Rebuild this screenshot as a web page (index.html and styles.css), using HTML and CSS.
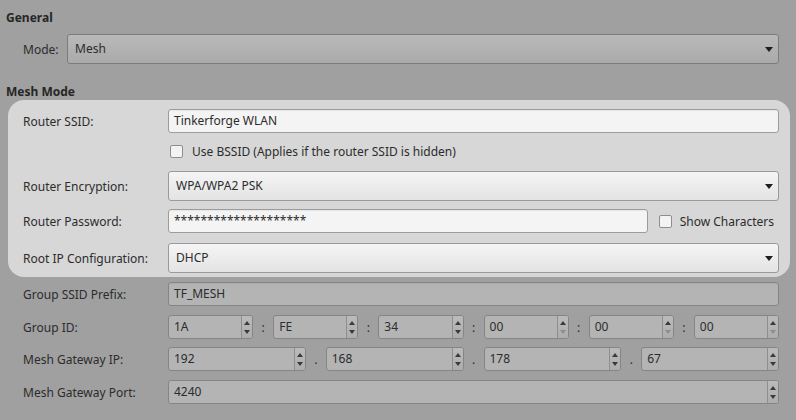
FILE: index.html
```html
<!DOCTYPE html>
<html lang="en">
<head>
  <meta charset="UTF-8">
  <title>Mesh Configuration</title>
  <link rel="stylesheet" href="styles.css">
</head>
<body>

  <h3 class="section-title first">General</h3>
  <div class="row outer">
    <span class="mode-label">Mode:</span>
    <div class="combo dark">Mesh<span class="arrow"></span></div>
  </div>

  <h3 class="section-title second">Mesh Mode</h3>
  <div class="panel">
    <div class="row">
      <span class="label">Router SSID:</span>
      <div class="edit">Tinkerforge WLAN</div>
    </div>
    <div class="row check-row">
      <span class="label"></span>
      <span class="check"></span>
      <span class="check-text">Use BSSID (Applies if the router SSID is hidden)</span>
    </div>
    <div class="row combo-row">
      <span class="label">Router Encryption:</span>
      <div class="combo">WPA/WPA2 PSK<span class="arrow"></span></div>
    </div>
    <div class="row pass-row">
      <span class="label">Router Password:</span>
      <div class="edit">********************</div>
      <span class="check show"></span>
      <span class="check-text">Show Characters</span>
    </div>
    <div class="row root-row">
      <span class="label">Root IP Configuration:</span>
      <div class="combo">DHCP<span class="arrow"></span></div>
    </div>
  </div>

  <div class="row outer prefix-row">
    <span class="label">Group SSID Prefix:</span>
    <div class="edit disabled">TF_MESH</div>
  </div>

  <div class="row outer gap9">
    <span class="label">Group ID:</span>
    <div class="fields">
      <div class="spin"><span class="spin-value">1A</span><span class="spin-btns"><i class="up"></i><i class="down"></i></span></div>
      <span class="sep">:</span>
      <div class="spin"><span class="spin-value">FE</span><span class="spin-btns"><i class="up"></i><i class="down"></i></span></div>
      <span class="sep">:</span>
      <div class="spin"><span class="spin-value">34</span><span class="spin-btns"><i class="up"></i><i class="down"></i></span></div>
      <span class="sep">:</span>
      <div class="spin"><span class="spin-value">00</span><span class="spin-btns"><i class="up"></i><i class="down off"></i></span></div>
      <span class="sep">:</span>
      <div class="spin"><span class="spin-value">00</span><span class="spin-btns"><i class="up"></i><i class="down off"></i></span></div>
      <span class="sep">:</span>
      <div class="spin"><span class="spin-value">00</span><span class="spin-btns"><i class="up"></i><i class="down off"></i></span></div>
    </div>
  </div>

  <div class="row outer gap8">
    <span class="label">Mesh Gateway IP:</span>
    <div class="fields">
      <div class="spin"><span class="spin-value">192</span><span class="spin-btns"><i class="up"></i><i class="down"></i></span></div>
      <span class="sep">.</span>
      <div class="spin"><span class="spin-value">168</span><span class="spin-btns"><i class="up"></i><i class="down"></i></span></div>
      <span class="sep">.</span>
      <div class="spin"><span class="spin-value">178</span><span class="spin-btns"><i class="up"></i><i class="down"></i></span></div>
      <span class="sep">.</span>
      <div class="spin"><span class="spin-value">67</span><span class="spin-btns"><i class="up"></i><i class="down"></i></span></div>
    </div>
  </div>

  <div class="row outer gap9">
    <span class="label">Mesh Gateway Port:</span>
    <div class="fields">
      <div class="spin"><span class="spin-value">4240</span><span class="spin-btns"><i class="up"></i><i class="down"></i></span></div>
    </div>
  </div>

</body>
</html>
```

FILE: styles.css
```css
body {
  margin: 0;
  background-color: #a0a0a0;
  font-family: "Noto Sans", "Open Sans", sans-serif;
  font-size: 12px;
  color: #2c2c2c;
}

.section-title {
  margin: 0;
  padding-left: 6px;
  height: 16px;
  line-height: 16px;
  font-size: 12px;
  font-weight: bold;
  color: #262626;
}

.section-title.first {
  margin-top: 10px;
}

.section-title.second {
  margin-top: 20px;
}

.row {
  display: flex;
  align-items: center;
}

.outer {
  padding: 0 17px 0 23px;
}

.row.outer:nth-of-type(1) {
  margin-top: 8px;
}

.mode-label {
  width: 44px;
}

.label {
  width: 145px;
  flex-shrink: 0;
}

.panel {
  margin-left: 8px;
  width: 782px;
  box-sizing: border-box;
  padding: 9px 11px 4px 15px;
  background-color: #d7d7d7;
  border-radius: 16px;
}

.edit {
  flex: 1;
  height: 24px;
  line-height: 22px;
  box-sizing: border-box;
  padding-left: 5px;
  background-color: #f4f4f4;
  border: 1px solid #9c9c9c;
  border-radius: 3px;
  box-shadow: inset 0 1px 1px rgba(0, 0, 0, 0.06);
}

.edit.disabled {
  background-color: #b4b4b4;
  border-color: #858585;
}

.combo {
  flex: 1;
  position: relative;
  height: 30px;
  line-height: 28px;
  box-sizing: border-box;
  padding-left: 7px;
  background: linear-gradient(#f5f5f5, #e3e3e3);
  border: 1px solid #9a9a9a;
  border-radius: 3px;
}

.combo.dark {
  background: linear-gradient(#b9b9b9, #aaaaaa);
  border-color: #7c7c7c;
}

.arrow {
  position: absolute;
  right: 5px;
  top: 12px;
  width: 0;
  height: 0;
  border-left: 4px solid transparent;
  border-right: 4px solid transparent;
  border-top: 5px solid #1e1e1e;
}

.check-row {
  margin-top: 6px;
  height: 24px;
}

.check {
  width: 13px;
  height: 13px;
  box-sizing: border-box;
  margin-left: 2px;
  background-color: #f3f3f3;
  border: 1px solid #8e8e8e;
  border-radius: 2px;
}

.check-text {
  margin-left: 9px;
}

.check.show {
  margin-left: 11px;
}

.pass-row .check-text {
  margin-left: 8px;
  margin-right: 5px;
}

.combo-row {
  margin-top: 8px;
}

.pass-row {
  margin-top: 8px;
}

.root-row {
  margin-top: 10px;
}

.prefix-row {
  margin-top: 5px;
}

.gap9 {
  margin-top: 9px;
}

.gap8 {
  margin-top: 8px;
}

.fields {
  flex: 1;
  display: flex;
  align-items: center;
}

.spin {
  flex: 1;
  display: flex;
  height: 24px;
  box-sizing: border-box;
  background-color: #b4b4b4;
  border: 1px solid #858585;
  border-radius: 3px;
}

.spin-value {
  flex: 1;
  padding-left: 5px;
  line-height: 22px;
}

.spin-btns {
  width: 11px;
  display: flex;
  flex-direction: column;
  align-items: center;
  justify-content: space-between;
  padding: 5px 0 4px;
  box-sizing: border-box;
  border-left: 1px solid #8e8e8e;
  background: linear-gradient(#bbbbbb, #adadad);
  border-radius: 0 2px 2px 0;
}

.spin-btns i {
  width: 0;
  height: 0;
  border-left: 3px solid transparent;
  border-right: 3px solid transparent;
}

.spin-btns .up {
  border-bottom: 4px solid #3a3a3a;
}

.spin-btns .down {
  border-top: 4px solid #3a3a3a;
}

.spin-btns .down.off {
  border-top-color: #8d8d8d;
}

.sep {
  width: 20px;
  text-align: center;
}
```
